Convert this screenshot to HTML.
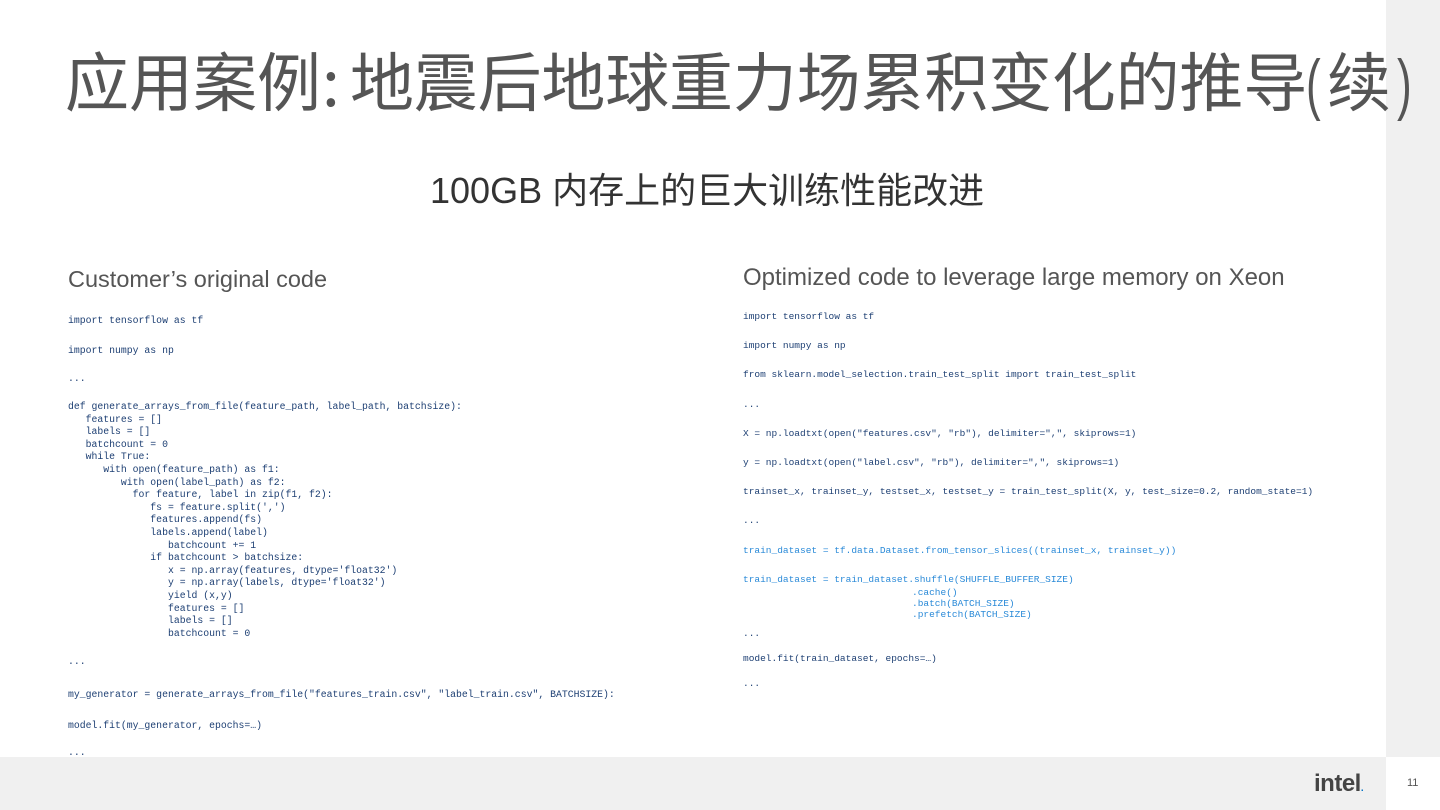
<!DOCTYPE html>
<html><head><meta charset="utf-8"><style>
*{margin:0;padding:0}
body{width:1440px;height:810px;position:relative;background:#fff;overflow:hidden;font-family:"Liberation Sans","Noto Sans CJK SC",sans-serif}
.strip{position:absolute;left:1386px;top:0;width:54px;height:757px;background:#f0f0f0}
.bot{position:absolute;left:0;top:757px;width:1386px;height:53px;background:#f0f0f0}
.t{position:absolute;top:39px;font-size:64px;font-weight:400;color:#555;white-space:nowrap;line-height:80px;font-family:"Noto Sans CJK SC",sans-serif}
.p{font-family:'Liberation Sans',sans-serif;font-size:68px;top:44px;transform:scaleX(0.65);transform-origin:left}
.sub{position:absolute;left:430px;top:162px;font-size:36px;color:#333;white-space:nowrap}
.hd{position:absolute;font-size:23.5px;color:#555;white-space:nowrap}
pre{position:absolute;font-family:"Liberation Mono",monospace;color:#1d3f73;white-space:pre}
.l{font-size:9.8px;left:68px;line-height:12.6px}
.r{font-size:9.5px;left:743px;top:310px;line-height:12px}
.b{color:#2a8ad8}
.logo{position:absolute;left:1314px;top:770px;font-size:24px;font-weight:700;color:#444;letter-spacing:-0.5px}
.pg{position:absolute;left:1407px;top:777px;font-size:11px;color:#555}
</style></head><body>
<div class="strip"></div><div class="bot"></div>
<div class="t" style="left:65px">应用案例</div>
<div class="t" style="left:322px">:</div>
<div class="t" style="left:350px;letter-spacing:-0.2px">地震后地球重力场累积变化的推导</div>
<div class="t p" style="left:1306px">(</div>
<div class="t" style="left:1327px">续</div>
<div class="t p" style="left:1397px">)</div>
<div class="sub">100GB 内存上的巨大训练性能改进</div>
<div class="hd" style="left:68px;top:266px">Customer’s original code</div>
<div class="hd" style="left:743px;top:264px;font-size:24px">Optimized code to leverage large memory on Xeon</div>
<pre class="l" style="top:315px">import tensorflow as tf</pre>
<pre class="l" style="top:345px">import numpy as np</pre>
<pre class="l" style="top:373px">...</pre>
<pre class="l" style="top:401px">def generate_arrays_from_file(feature_path, label_path, batchsize):
   features = []
   labels = []
   batchcount = 0
   while True:
      with open(feature_path) as f1:
         with open(label_path) as f2:
           for feature, label in zip(f1, f2):
              fs = feature.split(',')
              features.append(fs)
              labels.append(label)
                 batchcount += 1
              if batchcount > batchsize:
                 x = np.array(features, dtype='float32')
                 y = np.array(labels, dtype='float32')
                 yield (x,y)
                 features = []
                 labels = []
                 batchcount = 0</pre>
<pre class="l" style="top:656px">...</pre>
<pre class="l" style="top:689px">my_generator = generate_arrays_from_file("features_train.csv", "label_train.csv", BATCHSIZE):</pre>
<pre class="l" style="top:720px">model.fit(my_generator, epochs=…)</pre>
<pre class="l" style="top:747px">...</pre>
<pre class="r" style="line-height:14.6px">import tensorflow as tf

import numpy as np

from sklearn.model_selection.train_test_split import train_test_split

...

X = np.loadtxt(open("features.csv", "rb"), delimiter=",", skiprows=1)

y = np.loadtxt(open("label.csv", "rb"), delimiter=",", skiprows=1)

trainset_x, trainset_y, testset_x, testset_y = train_test_split(X, y, test_size=0.2, random_state=1)

...

<span class="b">train_dataset = tf.data.Dataset.from_tensor_slices((trainset_x, trainset_y))</span>

<span class="b">train_dataset = train_dataset.shuffle(SHUFFLE_BUFFER_SIZE)</span></pre>
<pre class="r b" style="top:587px;left:912px;line-height:11px">.cache()
.batch(BATCH_SIZE)
.prefetch(BATCH_SIZE)</pre>
<pre class="r" style="top:628px;line-height:12.5px">...

model.fit(train_dataset, epochs=…)

...</pre>
<div class="logo">intel<span style="font-size:10px;color:#0071c5">.</span></div>
<div class="pg">11</div>
</body></html>
